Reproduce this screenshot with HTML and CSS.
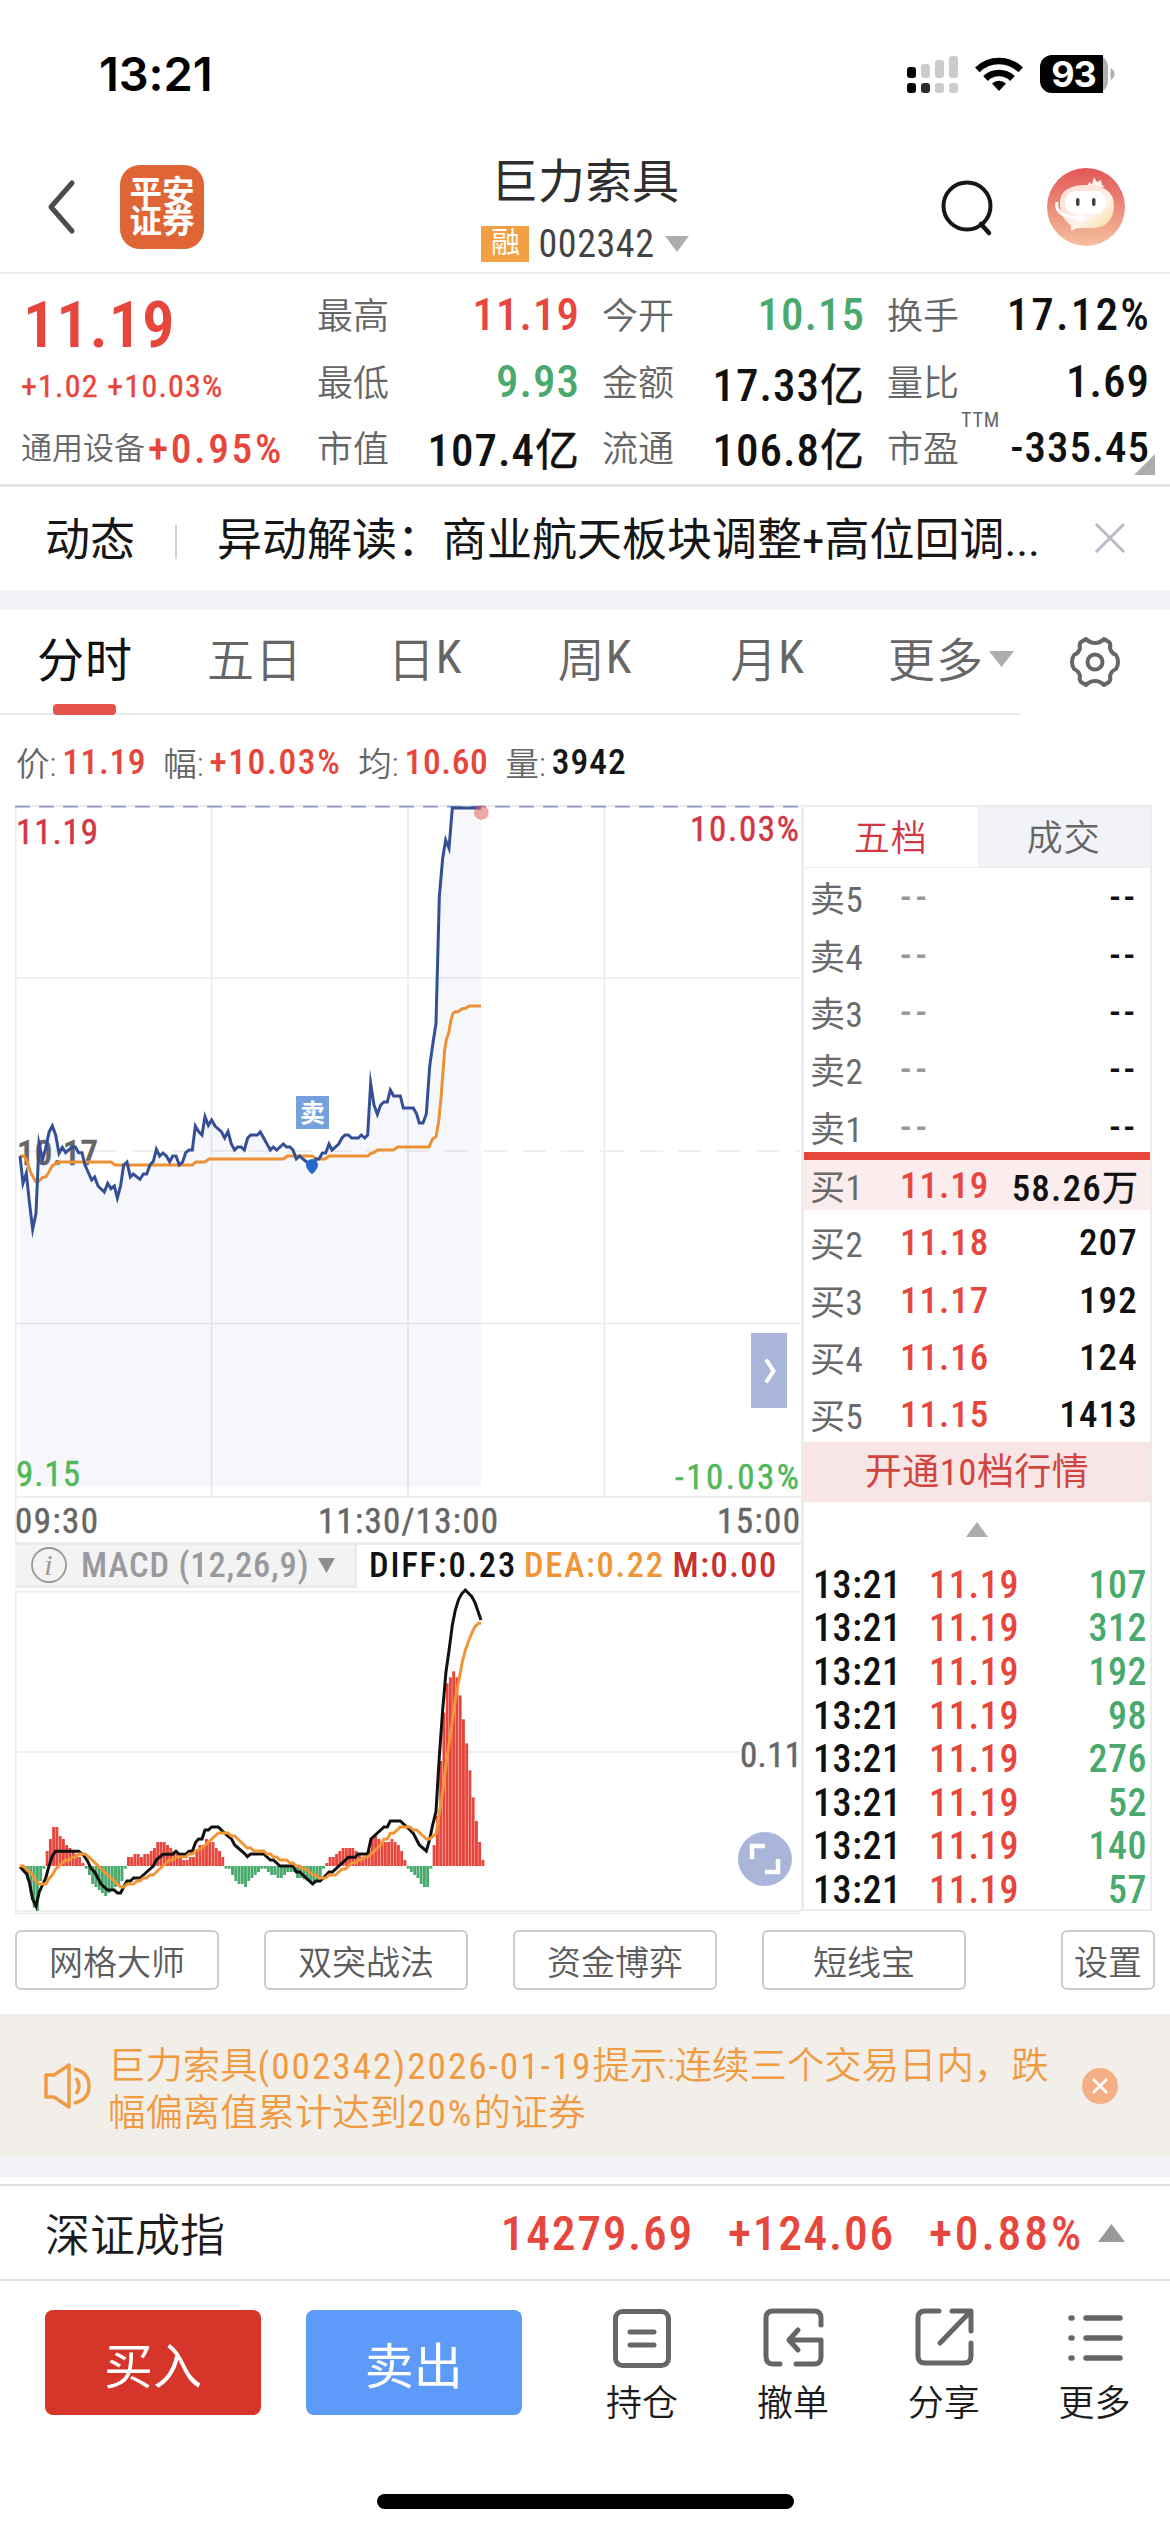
FILE: index.html
```html
<!DOCTYPE html>
<html lang="zh-CN">
<head>
<meta charset="utf-8">
<title>巨力索具 002342</title>
<link rel="stylesheet" href="styles.css">
</head>
<body>
<div class="status">
  <span class="clock">13:21</span>
  <svg class="status-icons" width="208" height="42" viewBox="0 0 208 42">
    <g fill="#000"><rect x="1" y="13" width="9" height="11" rx="3"/><rect x="1" y="29" width="9" height="10" rx="3"/><rect x="15" y="29" width="9" height="10" rx="3" fill="#2a2a2a"/></g>
    <g fill="#cbcbcb"><rect x="15" y="10" width="9" height="14" rx="3"/><rect x="29" y="6" width="9" height="18" rx="3"/><rect x="43" y="2" width="9" height="22" rx="3"/><rect x="29" y="29" width="9" height="10" rx="3"/><rect x="43" y="29" width="9" height="10" rx="3"/></g>
    <path d="M93 37l-7-7.6a10.5 10.5 0 0 1 14 0z"/>
    <g fill="none" stroke="#000" stroke-width="6.6"><path d="M79.500 24.500a19.500 19.500 0 0 1 27 0"/><path d="M71.300 15.800a31 31 0 0 1 43.400 0"/></g>
    <path fill="#b0b0b0" d="M190 1h0a12 12 0 0 1 12 12v14a12 12 0 0 1-12 12z"/>
    <path d="M146 1h51v38h-51a12 12 0 0 1-12-12V13a12 12 0 0 1 12-12z"/>
    <path fill="#b0b0b0" d="M204.500 14q4 2 4 6t-4 6z"/>
    <text class="battery" x="167.500" y="33" text-anchor="middle">93</text>
  </svg>
</div>

<header class="nav">
  <div class="nav-left">
    <svg width="30" height="56" viewBox="0 0 30 56"><path d="M26 4L5 28l21 24" fill="none" stroke="#4c4c4c" stroke-width="5" stroke-linecap="round" stroke-linejoin="round"/></svg>
    <div class="logo"><span>平安</span><span>证券</span></div>
  </div>
  <div class="nav-title">
    <h1>巨力索具</h1>
    <div class="code"><span class="margin-tag">融</span><span class="code-num">002342</span><svg width="24" height="16" viewBox="0 0 24 16"><path d="M0 0h24L12 16z" fill="#adadad"/></svg></div>
  </div>
  <div class="nav-right">
    <svg width="54" height="58" viewBox="0 0 54 58"><g fill="none" stroke="#161616" stroke-width="4"><circle cx="27" cy="28" r="23.500"/><path d="M41 46l8 9" stroke-width="4.500" stroke-linecap="round"/></g></svg>
    <svg width="78" height="78" viewBox="0 0 78 78">
      <defs><linearGradient id="av" x1="0" y1="0" x2="0" y2="1"><stop offset="0" stop-color="#e25656"/><stop offset="1" stop-color="#f6bf9f"/></linearGradient>
      <linearGradient id="bd" x1="0" y1="0" x2="1" y2="1"><stop offset=".35" stop-color="#fde3d8"/><stop offset=".6" stop-color="#fff4ee"/><stop offset="1" stop-color="#f7d58e"/></linearGradient></defs>
      <circle cx="39" cy="39" r="39" fill="url(#av)"/>
      <path d="M40 20l2-6 3 2 2-7 3 5 4-2 1 5 3 2z" fill="#fff1ec"/>
      <path d="M13 38q-2-20 24-21 30-1 30 21-1 20-19 22H33q-5 0-9 3 1-6-3-8-8-7-8-17z" fill="url(#bd)"/>
      <rect x="18" y="23" width="41" height="23" rx="11" fill="#fff"/>
      <path d="M10 34q-3 14 21 16" fill="none" stroke="#fff" stroke-width="3"/><circle cx="34" cy="50" r="4" fill="#fff"/>
      <rect x="29" y="30" width="3.500" height="8" rx="1.700" fill="#4b403c"/><rect x="45" y="30" width="3.500" height="8" rx="1.700" fill="#4b403c"/>
    </svg>
  </div>
</header>

<section class="quote">
  <div class="price">
    <div class="last">11.19</div>
    <div class="change">+1.02 +10.03%</div>
    <div class="sector">通用设备<b>+0.95%</b></div>
  </div>
  <dl class="stats">
    <div><dt>最高</dt><dd class="up">11.19</dd></div>
    <div><dt>今开</dt><dd class="down">10.15</dd></div>
    <div><dt>换手</dt><dd class="pct">17.12%</dd></div>
    <div><dt>最低</dt><dd class="down">9.93</dd></div>
    <div><dt>金额</dt><dd>17.33<i>亿</i></dd></div>
    <div><dt>量比</dt><dd>1.69</dd></div>
    <div><dt>市值</dt><dd>107.4<i>亿</i></dd></div>
    <div><dt>流通</dt><dd>106.8<i>亿</i></dd></div>
    <div><dt>市盈<sup>TTM</sup></dt><dd class="pe">-335.45</dd></div>
  </dl>
  <svg class="expand-corner" width="21" height="21" viewBox="0 0 21 21"><path d="M21 0v21H0z" fill="#adadad"/></svg>
</section>

<section class="news">
  <span class="news-tag">动态</span><span class="news-rule"></span>
  <span class="news-text">异动解读：商业航天板块调整+高位回调...</span>
  <svg width="32" height="32" viewBox="0 0 32 32"><path d="M2 2l28 28M30 2L2 30" stroke="#b9b9ca" stroke-width="3"/></svg>
</section>
<div class="band band-top"></div>

<nav class="periods">
  <a class="on">分时</a><a>五日</a><a>日<i>K</i></a><a>周<i>K</i></a><a class="month">月<i>K</i></a><a class="more">更多<svg width="25" height="16" viewBox="0 0 25 16"><path d="M0 0h25L12.500 16z" fill="#adadad"/></svg></a>
  <div class="gear"><svg width="52" height="52" viewBox="0 0 52 52"><g fill="none" stroke="#666" stroke-width="4" stroke-linejoin="round"><path d="M17 3q4 4 9 4t9-4l5 3q2 2 1 6 1 5 6 7 2 3 2 7t-2 7q-5 2-6 7 1 4-1 6l-5 3q-4-4-9-4t-9 4l-5-3q-2-2-1-6-1-5-6-7-2-3-2-7t2-7q5-2 6-7-1-4 1-6z"/><circle cx="26" cy="26" r="7.500"/></g></svg></div>
</nav>

<div class="ticker">
  <span>价:<b class="up">11.19</b></span><span>幅:<b class="up wide">+10.03%</b></span><span>均:<b class="up">10.60</b></span><span>量:<b>3942</b></span>
</div>

<main class="market">
  <div class="charts">
    <svg class="price-chart" width="801" height="737" viewBox="0 15 801 737">
      <g stroke="#ececec" stroke-width="1.600" fill="none">
        <path d="M15 15.700H801M15.700 15v737M211.500 16v691M408 16v691M604.500 16v691M15 188H801M15 533.500H801M15 707H801"/>
        <path d="M15 361H801" stroke-dasharray="24 15"/>
      </g>
      <path d="M15 16.700H798" stroke="#8b99c9" stroke-width="1.800" stroke-dasharray="15 9"/>
      <text x="17" y="375" textLength="81" class="ax mid">10.17</text>
      <g transform="scale(.33333)">
        <path id="area" fill="#27508a" fill-opacity=".045" d="M60 2090V1098L69 1180L79 1150L88 1235L98 1318L108 1270L117 1060L128 1108L137 1075L147 1027L157 1008L167 1035L177 1090L187 1072L197 1088L216 1071H226L236 1088H246L255 1125L275 1170L284 1161L294 1188L313 1206L323 1180L333 1196L343 1188L352 1224L362 1186L371 1125L381 1116L391 1161L400 1152L420 1168L430 1152H440L450 1125L460 1114L469 1078L479 1098L489 1089L499 1098L509 1115L518 1098H528L538 1125L548 1116L557 1088L567 1080H577L586 1008L596 1025L606 1035L615 980L625 1006L635 990L645 1008L664 1025L674 1044L684 1025L694 1062L704 1080L713 1071H723L733 1080L743 1044L752 1035H772L781 1026L811 1080L820 1071L830 1080L850 1062L860 1071H870L879 1080L889 1107L899 1098L909 1107L938 1130L948 1107H957L967 1089H977L987 1062L996 1080L1016 1062L1026 1044L1035 1035H1045L1055 1044H1075L1084 1035L1094 1044L1103 1035L1112 880L1122 945L1132 973L1142 945L1152 936H1162L1171 900L1181 918H1201L1210 954H1240L1250 972L1258 999H1269L1279 972L1289 830L1298 765L1308 700L1318 320L1328 205L1337 150L1347 175L1357 54H1443V2090Z"/>
        <path fill="none" stroke="#ec9136" stroke-width="9" d="M60 1098H70L79 1107L91 1145L107 1175H115L127 1163L138 1160L147 1145L157 1127L177 1116H333L345 1125H577L587 1116H615L627 1107H850L862 1098H938L948 1107H975L987 1098H1103L1113 1090L1123 1087L1133 1080H1181L1193 1071H1287L1298 1047L1308 1040L1316 995L1323 925L1329 845L1334 780L1339 750L1347 725L1353 690L1359 670L1366 665H1375L1385 657L1397 655L1407 648H1443"/>
        <path fill="none" stroke="#344f96" stroke-width="9" stroke-miterlimit="10" d="M60 1098L69 1180L79 1150L88 1235L98 1318L108 1270L117 1060L128 1108L137 1075L147 1027L157 1008L167 1035L177 1090L187 1072L197 1088L216 1071H226L236 1088H246L255 1125L275 1170L284 1161L294 1188L313 1206L323 1180L333 1196L343 1188L352 1224L362 1186L371 1125L381 1116L391 1161L400 1152L420 1168L430 1152H440L450 1125L460 1114L469 1078L479 1098L489 1089L499 1098L509 1115L518 1098H528L538 1125L548 1116L557 1088L567 1080H577L586 1008L596 1025L606 1035L615 980L625 1006L635 990L645 1008L664 1025L674 1044L684 1025L694 1062L704 1080L713 1071H723L733 1080L743 1044L752 1035H772L781 1026L811 1080L820 1071L830 1080L850 1062L860 1071H870L879 1080L889 1107L899 1098L909 1107L938 1130L948 1107H957L967 1089H977L987 1062L996 1080L1016 1062L1026 1044L1035 1035H1045L1055 1044H1075L1084 1035L1094 1044L1103 1035L1112 880L1122 945L1132 973L1142 945L1152 936H1162L1171 900L1181 918H1201L1210 954H1240L1250 972L1258 999H1269L1279 972L1289 830L1298 765L1308 700L1318 320L1328 205L1337 150L1347 175L1357 54H1443"/>
        <path fill="#2566cc" d="M918 1125a18 18 0 1 1 36 0q0 12-18 28q-18-16-18-28z"/>
        <rect x="888" y="918" width="99" height="99" fill="#74a1dc"/>
        <circle cx="1444" cy="68" r="22" fill="#e6625f" fill-opacity=".55"/>
      </g>
      <text x="312.500" y="332" text-anchor="middle" class="sell">卖</text>
      <text x="16" y="54" textLength="82" class="ax hi">11.19</text>
      <text x="690" y="51" textLength="109" class="ax hi">10.03%</text>
      <text x="16" y="696" textLength="64" class="ax lo">9.15</text>
      <text x="675" y="699" textLength="124" class="ax lo">-10.03%</text>
      <text x="15" y="743" textLength="83" class="ax">09:30</text>
      <text x="318" y="743" textLength="180" class="ax">11:30/13:00</text>
      <text x="717" y="743" textLength="83" class="ax">15:00</text>
      <rect x="751" y="543" width="36" height="75" fill="#aab5da"/>
      <path d="M766 569.500l7.500 11.500-7.500 11.500" fill="none" stroke="#fff" stroke-width="4"/>
    </svg>
    <div class="macd-head">
      <div class="macd-name">
        <svg width="36" height="38" viewBox="0 0 36 38"><circle cx="18" cy="19" r="17" fill="none" stroke="#999" stroke-width="1.800"/><text x="17.500" y="29" text-anchor="middle" class="info-i">i</text></svg>
        <span>MACD (12,26,9)</span>
        <svg width="17" height="15" viewBox="0 0 17 15"><path d="M0 0h17L8.500 15z" fill="#8e8e8e"/></svg>
      </div>
      <span class="diff">DIFF:0.23</span><span class="dea">DEA:0.22</span><span class="m">M:0.00</span>
    </div>
    <svg class="macd-chart" width="801" height="324" viewBox="0 20 801 324">
      <path d="M15 21.700H801M15 182H801M15 341H801M15 343.500H801M15.700 20V344" fill="none" stroke="#ececec" stroke-width="1.600"/>
      <g transform="scale(.33333)">
        <g id="bars"></g>
        <path fill="none" stroke="#111" stroke-width="9" d="M60 890L80 912L88 937L98 988L108 1008L118 965L137 925L147 888L157 858L167 844H236L250 855L262 872L273 895L284 906L303 942L323 960H343L352 969H362L371 951L381 933H391L401 924H420L450 897L460 888L469 870L489 853H518L528 844L538 853H557L567 844H577L587 817L596 807H606L615 780H625L635 771H655L664 780L674 789L684 798L694 806L704 825L733 850L742 860L752 852H791L811 870H820L840 888H879L889 906H899L938 942L948 933H960L977 917L987 906H997L1045 862H1065L1075 852H1103L1113 807L1152 771H1162L1171 753H1201L1230 780L1240 790L1258 825L1279 843L1289 808L1298 765L1308 725L1318 560L1328 420L1338 305L1348 235L1357 165L1366 120L1376 88L1386 70L1396 60L1415 79L1425 98L1435 127L1443 150"/>
        <path fill="none" stroke="#f19537" stroke-width="9" d="M60 888H70L98 915L108 933L118 942H138L147 925L157 915L167 897L177 888L196 871H206L216 862H226L236 852H255L265 860L362 951H372L381 942H401L411 933H420L430 924H440L450 915H460L469 906L508 870H518L528 861H557L567 852H577L587 843L606 834L655 789H684L694 798H704L742 834H752L762 843H791L801 852H811L821 861H830L840 870H860L870 879H879L889 888H899L909 897H919L938 915H948L958 924H977L987 915H1006L1026 897H1036L1055 879H1065L1075 870H1084L1094 861H1103L1123 843L1142 825L1152 807H1162L1171 790H1181L1201 771H1230L1240 780H1250L1279 807H1289L1308 792L1318 730L1328 665L1338 585L1348 515L1358 445L1368 375L1377 330L1386 280L1396 240L1406 213L1415 190L1425 170L1435 160H1443"/>
      </g>
      <rect x="739" y="165" width="60" height="34" fill="#fff"/>
      <text x="740" y="197" textLength="62" class="ax">0.11</text>
      <circle cx="765" cy="289" r="27" fill="#aab5da"/>
      <path d="M752 289v-13h13M765 302h13v-13" fill="none" stroke="#fff" stroke-width="4.500"/>
    </svg>
  </div>

  <aside class="book">
    <div class="book-tabs"><span class="sel">五档</span><span>成交</span></div>
    <div class="levels sells">
      <div><span>卖5</span><em>--</em><b>--</b></div>
      <div><span>卖4</span><em>--</em><b>--</b></div>
      <div><span>卖3</span><em>--</em><b>--</b></div>
      <div><span>卖2</span><em>--</em><b>--</b></div>
      <div><span>卖1</span><em>--</em><b>--</b></div>
    </div>
    <div class="levels buys">
      <div class="first"><span>买1</span><em>11.19</em><b>58.26<i>万</i></b></div>
      <div><span>买2</span><em>11.18</em><b>207</b></div>
      <div><span>买3</span><em>11.17</em><b>192</b></div>
      <div><span>买4</span><em>11.16</em><b>124</b></div>
      <div><span>买5</span><em>11.15</em><b>1413</b></div>
    </div>
    <div class="open-ten">开通10档行情</div>
    <div class="fold"><svg width="22" height="15" viewBox="0 0 22 15"><path d="M11 0l11 15H0z" fill="#adadad"/></svg></div>
    <div class="trades">
      <div><span>13:21</span><em>11.19</em><b>107</b></div>
      <div><span>13:21</span><em>11.19</em><b>312</b></div>
      <div><span>13:21</span><em>11.19</em><b>192</b></div>
      <div><span>13:21</span><em>11.19</em><b>98</b></div>
      <div><span>13:21</span><em>11.19</em><b>276</b></div>
      <div><span>13:21</span><em>11.19</em><b>52</b></div>
      <div><span>13:21</span><em>11.19</em><b>140</b></div>
      <div><span>13:21</span><em>11.19</em><b>57</b></div>
    </div>
  </aside>
</main>

<div class="tools"><button>网格大师</button><button>双突战法</button><button>资金博弈</button><button>短线宝</button><button class="setup">设置</button></div>

<section class="notice">
  <svg width="48" height="46" viewBox="0 0 48 46"><g fill="none" stroke="#f09a41" stroke-width="3.400" stroke-linejoin="round"><path d="M2 12h8L25 2v42L10 34H2z"/><path d="M30 6q15 3 15 17T30 40M32 15q6 8 0 16"/></g></svg>
  <p>巨力索具<span class="num">(002342)2026-01-19</span>提示:连续三个交易日内，跌<br>幅偏离值累计达到<span class="num">20%</span>的证券</p>
  <svg width="36" height="36" viewBox="0 0 36 36"><circle cx="18" cy="18" r="18" fill="#f4af84"/><path d="M11 11l14 14M25 11L11 25" stroke="#fff" stroke-width="2.600"/></svg>
</section>
<div class="band band-bottom"></div>

<section class="index">
  <span class="index-name">深证成指</span>
  <span class="n1">14279.69</span><span class="n2">+124.06</span><span class="n3">+0.88%</span>
  <svg width="27" height="18" viewBox="0 0 27 18"><path d="M13.500 0L27 18H0z" fill="#999"/></svg>
</section>

<footer class="actions">
  <button class="buy">买入</button><button class="sell-btn">卖出</button>
  <div class="act"><svg width="64" height="64" viewBox="0 0 64 64"><g fill="none" stroke="#666" stroke-width="5" stroke-linecap="round"><rect x="5.500" y="5.500" width="53" height="54" rx="7"/><path d="M20 26h24M20 39h24"/></g></svg>持仓</div>
  <div class="act"><svg width="64" height="64" viewBox="0 0 64 64"><g fill="none" stroke="#666" stroke-width="5" stroke-linecap="round" stroke-linejoin="round"><path d="M60 19v-7q0-7-7-7H12q-7 0-7 7v38q0 8 7 8h7M35 58h18q7 0 7-7V34H29M37 24l-9 10 9 10"/></g></svg>撤单</div>
  <div class="act"><svg width="64" height="64" viewBox="0 0 64 64"><g fill="none" stroke="#666" stroke-width="5" stroke-linecap="round" stroke-linejoin="round"><path d="M27 5H13q-7 0-7 7v38q0 7 7 7h39q7 0 7-7V37M40 5h19v20M58 6L28 37"/></g></svg>分享</div>
  <div class="act"><svg width="64" height="64" viewBox="0 0 64 64"><g fill="none" stroke="#666" stroke-width="5.500" stroke-linecap="round"><path d="M23 12h34M23 32h34M23 52h34M8 12h1M8 32h1M8 52h1"/></g></svg>更多</div>
</footer>
<div class="home"></div>
<script src="app.js"></script>
</body>
</html>
```
FILE: styles.css
```css
* { box-sizing: border-box; margin: 0; padding: 0; }
body {
  width: 1170px; height: 2532px; overflow: hidden; background: #fff; color: #111;
  display: flex; flex-direction: column;
  font-family: "Roboto Condensed", Roboto, "Noto Sans CJK SC", sans-serif; font-stretch: 75%;
}
body > * { flex: none; }
svg { display: block; flex: none; overflow: visible; }
i, em, dt { font-style: normal; }
button { font: inherit; background: none; border: 0; }
.up { color: #e6463c; }
.down { color: #4aaa6e; }

.status { height: 140px; display: flex; justify-content: space-between; align-items: flex-start; padding: 54px 56px 0 99px; }
.clock { font: 600 47px/40px Inter, sans-serif; letter-spacing: -.1px; color: #000; }
.battery { font: 700 36px Inter, sans-serif; fill: #fff; letter-spacing: -1px; }

.nav { height: 134px; padding-top: 2px; border-bottom: 2px solid #ebebeb; display: grid; grid-template-columns: 1fr 1fr 1fr; align-items: center; }
.nav-left { display: flex; align-items: center; padding-left: 46px; gap: 44px; }
.logo { width: 84px; height: 84px; border-radius: 20px; background: #df6436; color: #fff; display: flex; flex-direction: column; align-items: center; justify-content: center; font-weight: 700; font-size: 32.500px; line-height: 29px; padding-top: 2px; }
.nav-title { display: flex; flex-direction: column; align-items: center; padding-top: 3px; }
.nav-title h1 { font-size: 47px; font-weight: 400; line-height: 56px; color: #2e2e2e; }
.code { display: flex; align-items: center; margin-top: 14px; height: 40px; }
.margin-tag { width: 48px; height: 36px; background: #f3a045; color: #fff; font-size: 29px; line-height: 35px; text-align: center; margin-right: 9px; }
.code-num { font-size: 38px; line-height: 40px; color: #444; letter-spacing: .6px; margin-right: 10px; }
.nav-right { display: flex; align-items: center; justify-content: flex-end; padding-right: 45px; gap: 53px; }

.quote { height: 213px; border-bottom: 3px solid #e2e2e8; display: flex; position: relative; }
.price { width: 317px; padding-left: 21px; color: #e6463c; }
.last { font-size: 65px; font-weight: 600; line-height: 72px; margin-top: 15px; padding-left: 2px; letter-spacing: .6px; }
.change { font-size: 32px; line-height: 36px; margin-top: 7px; letter-spacing: 1.200px; white-space: nowrap; -webkit-text-stroke: .4px currentColor; }
.sector { font-size: 31px; line-height: 44px; margin-top: 23px; color: #666; font-weight: 350; white-space: nowrap; display: flex; }
.sector b { font-size: 41.500px; font-weight: 500; color: #e6463c; margin-left: 3px; letter-spacing: 2.600px; }
.stats { flex: 1; display: grid; grid-template-columns: 262px 262px 262px; column-gap: 23px; grid-template-rows: 68px 67px 64px; padding-top: 6px; }
.stats > div { display: flex; justify-content: space-between; align-items: center; }
.stats dt { font-size: 36px; font-weight: 350; color: #666; position: relative; white-space: nowrap; margin-top: -3px; }
.stats dt sup { position: absolute; left: 74px; top: -10px; font-size: 20.500px; line-height: 20px; letter-spacing: .6px; font-weight: 400; }
.stats dd { font-size: 45px; font-weight: 500; letter-spacing: 1px; margin-right: -1px; white-space: nowrap; }
.stats dd i { font-weight: 400; font-size: 44px; -webkit-text-stroke: .5px currentColor; }
.stats .pct { letter-spacing: 2.200px; margin-right: -2px; }
.stats .pe { font-size: 43px; letter-spacing: 1px; }
.expand-corner { position: absolute; right: 15px; bottom: 9px; }

.news { height: 103px; display: flex; align-items: center; padding: 0 44px 5px 45px; font-size: 45px; font-weight: 400; color: #161616; white-space: nowrap; }
.news-rule { width: 2px; height: 34px; background: #d2d2d2; margin: 12px 40px 0 40px; }
.news-text { flex: 1; }
.news svg { margin-top: 4px; }
.band { background: #f2f3f8; }
.band-top { height: 20px; }
.band-bottom { height: 19px; }

.periods { height: 105px; position: relative; display: flex; color: #666; font-weight: 350; font-size: 47px; letter-spacing: 1px; }
.periods::after { content: ""; position: absolute; left: 0; bottom: 0; width: 1020px; height: 2px; background: #e8e8e8; }
.periods a { width: 170px; height: 92px; display: flex; align-items: center; justify-content: center; white-space: nowrap; }
.periods i { font-weight: 400; }
.periods .month { padding-left: 5px; }
.periods .more { width: 202px; gap: 5px; }
.periods .more svg { margin-top: 6px; }
.periods a.on { color: #111; font-weight: 400; position: relative; }
.periods a.on::after { content: ""; position: absolute; z-index: 1; left: 53px; top: 94px; width: 63px; height: 11px; border-radius: 4px; background: #e5534d; }
.periods .gear { position: absolute; left: 1069px; top: 26px; }

.ticker { height: 90px; padding: 3px 0 0 16px; display: flex; align-items: center; font-size: 33.500px; font-weight: 350; color: #666; gap: 17px; white-space: nowrap; }
.ticker span { display: flex; align-items: center; }
.ticker b { font-size: 35.500px; font-weight: 500; letter-spacing: .6px; margin-left: 6px; }
.ticker .wide { letter-spacing: 1.600px; }
.ticker b:not(.up) { color: #161616; letter-spacing: 1px; }

.market { height: 1109px; display: flex; }
.charts { width: 801px; }
.ax { font-size: 35px; fill: #666; stroke: #666; stroke-width: .5px; }
.ax.hi { fill: #d23746; stroke: #d23746; }
.ax.lo { fill: #50b85a; stroke: #50b85a; }
.ax.mid { font-weight: 500; }
.sell { font-size: 25px; fill: #fff; font-weight: 700; }
.macd-head { height: 48px; margin-left: 15px; border-top: 3px solid #ebebeb; display: flex; align-items: flex-start; font-size: 34.500px; font-weight: 500; line-height: 41px; white-space: nowrap; }
.macd-name { width: 342px; height: 43px; background: #f3f3f4; border-right: 3px solid #ebebeb; border-bottom: 3px solid #ebebeb; display: flex; align-items: center; color: #9a9a9e; padding-left: 16px; margin-right: 12px; }
.macd-name span { margin: 0 9px 0 14px; letter-spacing: .8px; }
.info-i { font: italic 30px "Liberation Serif", serif; fill: #999; }
.diff { margin-right: 7px; letter-spacing: 1.800px; }
.dea { color: #f19537; margin-right: 8px; letter-spacing: 1.700px; }
.m { color: #c9302c; letter-spacing: 1.500px; }

.book { width: 351px; height: 1106px; border: 2px solid #ececec; border-left-width: 3px; }
.book-tabs { display: flex; height: 61px; border-bottom: 1px solid #ececec; font-size: 36px; font-weight: 350; letter-spacing: 1px; line-height: 64px; text-align: center; color: #666; }
.book-tabs span { width: 173px; background: #f2f3f8; }
.book-tabs .sel { width: 174px; background: #fff; color: #d23746; }
.levels > div { display: flex; align-items: center; height: 57.400px; padding: 0 12px 0 6px; white-space: nowrap; }
.levels span { width: 90px; font-size: 35px; font-weight: 400; color: #6a6a6a; margin-top: -2px; letter-spacing: .5px; }
.levels em { color: #e6463c; font-weight: 500; font-size: 37px; letter-spacing: 1px; }
.levels b { margin-left: auto; font-weight: 500; font-size: 37px; letter-spacing: 1.200px; }
.levels b i { font-weight: 400; font-size: 36px; letter-spacing: 0; -webkit-text-stroke: .5px currentColor; }
.sells { height: 284px; padding-top: 1px; }
.sells em { color: #999; letter-spacing: 4px; }
.sells b { letter-spacing: 3px; }
.buys { border-top: 8px solid #e6463c; height: 290px; }
.buys .first { height: 50px; background: #fbeced; margin-bottom: 4px; }
.open-ten { height: 60px; background: #f8e6e7; color: #d2453f; font-size: 37px; font-weight: 400; line-height: 62px; text-align: center; letter-spacing: .4px; }
.fold { height: 61px; padding-top: 20px; display: flex; justify-content: center; }
.trades > div { display: flex; align-items: center; height: 43.600px; padding: 0 3px 0 9px; font-size: 38px; white-space: nowrap; font-weight: 500; }
.trades span { width: 116px; letter-spacing: .6px; }
.trades em { color: #e6463c; letter-spacing: .7px; }
.trades b { margin-left: auto; font-weight: 500; color: #4aaa6e; letter-spacing: .5px; }

.tools { height: 100px; padding: 16px 15px 0; display: flex; gap: 45px; }
.tools button { width: 204px; height: 60px; border: 2px solid #cbcbcb; border-radius: 6px; font-size: 34px; color: #5c5c5c; font-weight: 350; }
.tools .setup { width: 94px; margin-left: auto; }

.notice { height: 144px; background: #f2efeb; display: flex; align-items: center; padding: 0 52px 0 44px; }
.notice p { flex: 1; margin-left: 16px; margin-top: 7px; font-size: 37.400px; line-height: 47px; color: #f09a41; white-space: nowrap; font-weight: 350; }
.notice .num { font-weight: 400; letter-spacing: 1.900px; }

.index { margin-top: 7px; height: 97px; border-top: 2px solid #dedede; border-bottom: 2px solid #e4e4e4; display: flex; align-items: center; padding: 0 45px 0 45px; font-size: 45px; font-weight: 350; color: #1c1c1c; white-space: nowrap; }
.index-name { flex: 1; }
.n1, .n2, .n3 { color: #e6463c; font-size: 47.500px; font-weight: 500; padding-top: 2px; letter-spacing: 1.700px; }
.n1, .n2 { margin-right: 34px; }
.n3 { margin-right: 14px; letter-spacing: 2.900px; }

.actions { height: 160px; display: flex; padding: 29px 0 0 45px; }
.actions button { width: 216px; height: 105px; border-radius: 8px; color: #fff; font-size: 49px; margin-right: 45px; }
.actions .buy { background: #d63529; }
.actions .sell-btn { background: #5e9af8; }
.act { width: 151px; display: flex; flex-direction: column; align-items: center; font-size: 36px; font-weight: 350; line-height: 40px; color: #1c1c1c; margin-top: -4px; gap: 14px; }
.home { width: 417px; height: 15px; border-radius: 8px; background: #000; margin: 53px 0 0 377px; }
```
FILE: app.js
```js
// MACD histogram: one value per minute, drawn around the zero line
const bars = [0,-20,-40,-80,-125,-135,-45,-8,45,81,117,117,90,81,63,54,45,36,27,9,-8,-27,-54,-63,-72,-81,-90,-81,-72,-63,-54,-45,-8,
  27,27,36,36,27,36,36,45,54,72,72,72,63,54,45,36,27,18,18,27,27,45,63,63,81,72,72,54,45,27,-8,-8,-27,-45,-54,-54,-63,-45,-36,-27,-18,-8,-8,
  -18,-27,-27,-36,-36,-27,-18,-18,-18,-36,-36,-40,-45,-50,-54,-45,-36,-8,9,27,27,36,45,54,54,54,54,45,36,27,36,50,81,90,81,75,72,72,81,72,63,45,18,
  -8,-18,-27,-36,-54,-63,-63,-8,63,150,315,460,548,566,584,566,512,440,368,287,206,135,72,18];
const zero = 888, step = 9.757;
document.getElementById('bars').innerHTML = bars.map((v, i) =>
  `<rect x="${(59 + i * step).toFixed(1)}" y="${v > 0 ? zero - v : zero}" width="8.7" height="${Math.abs(v)}" fill="${v > 0 ? '#e6463c' : '#4aaa6e'}"/>`).join('');
```
